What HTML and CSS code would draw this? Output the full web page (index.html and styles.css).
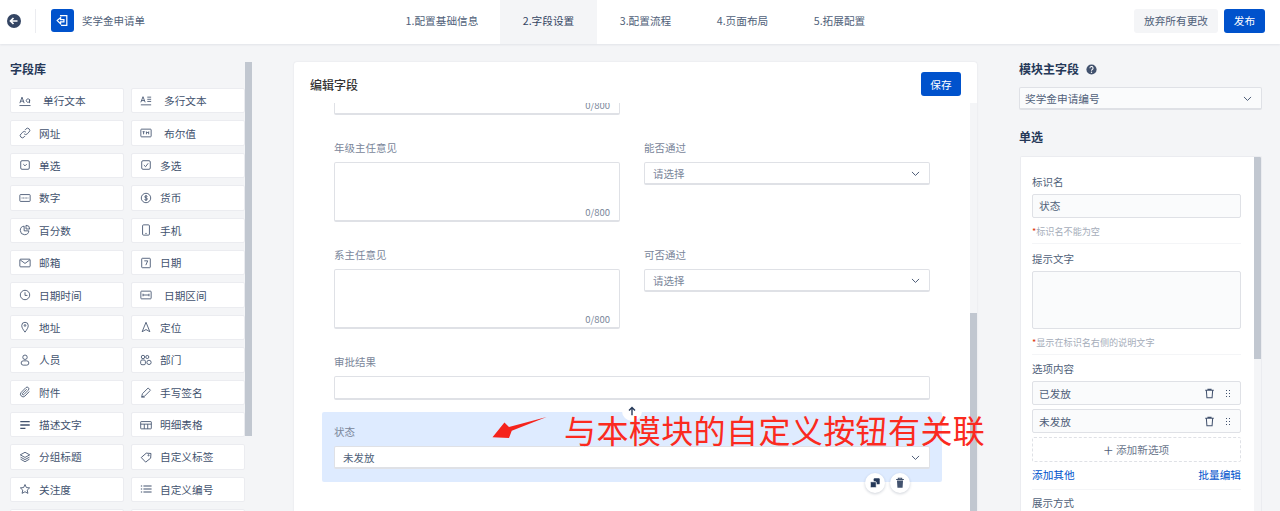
FILE: index.html
```html
<!DOCTYPE html>
<html lang="zh-CN">
<head>
<meta charset="utf-8">
<title>奖学金申请单</title>
<link rel="stylesheet" href="styles.css">
</head>
<body>
<svg class="defs" width="0" height="0" aria-hidden="true">
  <symbol id="i-text" viewBox="0 0 14 14"><path d="M1 9.500 3.500 2.500 6 9.500M1.800 7.200h3.400M12.300 5v4.500M12.300 7.300a2 2 0 1 0-.1.200M.5 12.300h13"/></symbol>
  <symbol id="i-multi" viewBox="0 0 14 14"><path d="M1 8.500 3.500 2 6 8.500M1.800 6.500h3.400M8.500 2.500H13M8.500 5H13M8.500 7.500H13M1 11.500h12"/></symbol>
  <symbol id="i-link" viewBox="0 0 14 14"><path d="M6 8a2.500 2.500 0 0 0 3.600 0l2.200-2.200a2.500 2.500 0 0 0-3.600-3.600L7 3.400M8 6a2.500 2.500 0 0 0-3.600 0L2.200 8.200a2.500 2.500 0 0 0 3.600 3.600L7 10.600"/></symbol>
  <symbol id="i-bool" viewBox="0 0 14 14"><rect x="1" y="2.500" width="12" height="9" rx=".8"/><path d="M3 5.500h2.500M4.200 5.500v3M7.500 8.500v-3l1.300 1.500 1.300-1.500v3"/></symbol>
  <symbol id="i-radio" viewBox="0 0 14 14"><rect x="2" y="2" width="10" height="10" rx="1.500"/><path d="M5 6l2 2 2-2"/></symbol>
  <symbol id="i-check" viewBox="0 0 14 14"><rect x="2" y="2" width="10" height="10" rx="1.500"/><path d="M4.500 7l2 2 3-4"/></symbol>
  <symbol id="i-num" viewBox="0 0 14 14"><rect x="1" y="3" width="12" height="8" rx=".8"/><path d="M3 7h8" stroke-dasharray="1.200 .6"/></symbol>
  <symbol id="i-money" viewBox="0 0 14 14"><circle cx="7" cy="7" r="5.500"/><path d="M8.700 5.200C8 4.300 5.400 4.300 5.400 5.700c0 1.500 3.300.8 3.300 2.400 0 1.500-2.700 1.500-3.500.6M7 3.500v7"/></symbol>
  <symbol id="i-pie" viewBox="0 0 14 14"><path d="M6 2.500a5 5 0 1 0 5.500 5.500H6z"/><path d="M8.200 1.500a4.300 4.300 0 0 1 4.300 4.300H8.200z"/></symbol>
  <symbol id="i-phone" viewBox="0 0 14 14"><rect x="3" y="1" width="8" height="12" rx="1.200"/><path d="M6.200 11h1.600"/></symbol>
  <symbol id="i-mail" viewBox="0 0 14 14"><rect x="1" y="2.500" width="12" height="9" rx="1"/><path d="M1.500 3.500 7 7.500l5.500-4"/></symbol>
  <symbol id="i-date" viewBox="0 0 14 14"><rect x="2" y="1.500" width="10" height="11" rx=".8"/><path d="M5 4.500h4L6.800 9.500"/></symbol>
  <symbol id="i-clock" viewBox="0 0 14 14"><circle cx="7" cy="7" r="5.500"/><path d="M7 3.800V7.500h2.800"/></symbol>
  <symbol id="i-range" viewBox="0 0 14 14"><rect x="1" y="2.500" width="12" height="9" rx=".8"/><path d="M3.500 7h7M3.500 5.500v3M10.500 5.500v3"/></symbol>
  <symbol id="i-pin" viewBox="0 0 14 14"><path d="M7 13C4.800 10 3.200 7.800 3.200 5.300a3.800 3.800 0 0 1 7.600 0C10.800 7.800 9.200 10 7 13z"/><circle cx="7" cy="5.200" r="1"/></symbol>
  <symbol id="i-nav" viewBox="0 0 14 14"><path d="M7 1.500 2.500 12.500 7 10l4.500 2.500z"/></symbol>
  <symbol id="i-user" viewBox="0 0 14 14"><circle cx="7" cy="3.800" r="2.600"/><rect x="2.500" y="8" width="9" height="5" rx="2.500"/></symbol>
  <symbol id="i-dept" viewBox="0 0 14 14"><circle cx="3.500" cy="3.500" r="2"/><circle cx="8.500" cy="3.500" r="1.800"/><rect x=".8" y="7" width="5.500" height="5.500" rx="1.500"/><circle cx="10.500" cy="9.800" r="2.500"/></symbol>
  <symbol id="i-clip" viewBox="0 0 14 14"><path d="M12 6.500 7 11.700a3 3 0 0 1-4.400-4.300l5.400-5.500a2 2 0 0 1 2.900 2.900L5.700 10a1 1 0 0 1-1.500-1.500L9 3.700"/></symbol>
  <symbol id="i-pen" viewBox="0 0 14 14"><path d="M2 12.500l.8-3.500 6.700-6.700 2.700 2.700-6.700 6.700zM1.500 13h4"/></symbol>
  <symbol id="i-desc" viewBox="0 0 14 14"><path d="M1.500 3h11M1.500 7h11M1.500 11h6" stroke-width="1.500"/></symbol>
  <symbol id="i-table" viewBox="0 0 14 14"><rect x=".8" y="3" width="12.400" height="8.500" rx=".6"/><path d="M.8 6h12.400M5 6v5.500M9 6v5.500"/></symbol>
  <symbol id="i-layer" viewBox="0 0 14 14"><path d="M7 1.500 12.500 4.500 7 7.500 1.500 4.500zM1.800 7.200 7 10l5.200-2.800M1.800 9.500 7 12.500l5.200-3"/></symbol>
  <symbol id="i-tag" viewBox="0 0 14 14"><path d="M1.500 8 7 2.500h5.500V8L7 13z" transform="rotate(4 7 7)"/><circle cx="10" cy="5" r=".7"/></symbol>
  <symbol id="i-star" viewBox="0 0 14 14"><path d="M7 1.800 8.600 5.300l3.800.4-2.800 2.600.8 3.800L7 10.200l-3.400 1.900.8-3.800L1.600 5.700l3.800-.4z"/></symbol>
  <symbol id="i-list" viewBox="0 0 14 14"><path d="M1 3.500h1.500M4 3.500h9.500M1 7h1.500M4 7h9.500M1 10.500h1.500M4 10.500h9.500" stroke-width="1.300"/></symbol>
  <symbol id="i-trash" viewBox="0 0 14 14"><path d="M1.500 3h11M5 3V1.500h4V3M3 3l.7 9.500h6.600L11 3" stroke-width="1.300"/></symbol>
  <symbol id="i-chev" viewBox="0 0 14 14"><path d="M2.500 5 7 9.500 11.500 5" stroke-width="1.200"/></symbol>
</svg>

<header class="topbar">
  <div class="brand">
    <svg class="back" viewBox="0 0 14 14"><circle cx="7" cy="7" r="7" fill="#344563"/><path d="M10.500 7H4M6.500 4 3.500 7l3 3" fill="none" stroke="#fff" stroke-width="1.700"/></svg>
    <span class="vline"></span>
    <span class="logo"><svg viewBox="0 0 24 24"><path d="M10 7.500V7h6.500v10H10.500M6.500 12l3.500-3v2h3.500v2.500H10v2z" fill="none" stroke="#fff" stroke-width="1.300"/></svg></span>
    <span class="app-name">奖学金申请单</span>
  </div>
  <nav class="tabs">
    <a class="tab">1.配置基础信息</a>
    <a class="tab active">2.字段设置</a>
    <a class="tab">3.配置流程</a>
    <a class="tab">4.页面布局</a>
    <a class="tab">5.拓展配置</a>
  </nav>
  <div class="actions">
    <button class="btn ghost">放弃所有更改</button>
    <button class="btn primary">发布</button>
  </div>
</header>

<main class="main">
  <aside class="library">
    <div class="library-list">
      <h2 class="title lib-title">字段库</h2>
      <div class="fields">
        <div class="field wide"><svg class="ic"><use href="#i-text"/></svg>单行文本</div>
        <div class="field wide"><svg class="ic"><use href="#i-multi"/></svg>多行文本</div>
        <div class="field"><svg class="ic"><use href="#i-link"/></svg>网址</div>
        <div class="field wide"><svg class="ic"><use href="#i-bool"/></svg>布尔值</div>
        <div class="field"><svg class="ic"><use href="#i-radio"/></svg>单选</div>
        <div class="field"><svg class="ic"><use href="#i-check"/></svg>多选</div>
        <div class="field"><svg class="ic"><use href="#i-num"/></svg>数字</div>
        <div class="field"><svg class="ic"><use href="#i-money"/></svg>货币</div>
        <div class="field"><svg class="ic"><use href="#i-pie"/></svg>百分数</div>
        <div class="field"><svg class="ic"><use href="#i-phone"/></svg>手机</div>
        <div class="field"><svg class="ic"><use href="#i-mail"/></svg>邮箱</div>
        <div class="field"><svg class="ic"><use href="#i-date"/></svg>日期</div>
        <div class="field"><svg class="ic"><use href="#i-clock"/></svg>日期时间</div>
        <div class="field wide"><svg class="ic"><use href="#i-range"/></svg>日期区间</div>
        <div class="field"><svg class="ic"><use href="#i-pin"/></svg>地址</div>
        <div class="field"><svg class="ic"><use href="#i-nav"/></svg>定位</div>
        <div class="field"><svg class="ic"><use href="#i-user"/></svg>人员</div>
        <div class="field"><svg class="ic"><use href="#i-dept"/></svg>部门</div>
        <div class="field"><svg class="ic"><use href="#i-clip"/></svg>附件</div>
        <div class="field"><svg class="ic"><use href="#i-pen"/></svg>手写签名</div>
        <div class="field"><svg class="ic"><use href="#i-desc"/></svg>描述文字</div>
        <div class="field"><svg class="ic"><use href="#i-table"/></svg>明细表格</div>
        <div class="field"><svg class="ic"><use href="#i-layer"/></svg>分组标题</div>
        <div class="field"><svg class="ic"><use href="#i-tag"/></svg>自定义标签</div>
        <div class="field"><svg class="ic"><use href="#i-star"/></svg>关注度</div>
        <div class="field"><svg class="ic"><use href="#i-list"/></svg>自定义编号</div>
        <div class="field"></div>
        <div class="field"></div>
      </div>
    </div>
    <div class="lib-thumb"></div>
  </aside>

  <section class="editor">
    <div class="editor-head">
      <h2 class="editor-title">编辑字段</h2>
      <button class="btn primary">保存</button>
    </div>
    <div class="editor-body">
      <div class="form">
        <div class="form-row cols">
          <div class="stub"><span class="count">0/800</span></div>
        </div>
        <div class="form-row cols">
          <div>
            <label class="lbl">年级主任意见</label>
            <div class="area"><span class="count">0/800</span></div>
          </div>
          <div>
            <label class="lbl">能否通过</label>
            <div class="select"><span class="placeholder">请选择</span><svg class="chev"><use href="#i-chev"/></svg></div>
          </div>
        </div>
        <div class="form-row cols">
          <div>
            <label class="lbl">系主任意见</label>
            <div class="area"><span class="count">0/800</span></div>
          </div>
          <div>
            <label class="lbl">可否通过</label>
            <div class="select"><span class="placeholder">请选择</span><svg class="chev"><use href="#i-chev"/></svg></div>
          </div>
        </div>
        <div class="form-row last">
          <label class="lbl">审批结果</label>
          <div class="input"></div>
        </div>
        <div class="selected">
          <span class="float-btn up"><svg viewBox="0 0 14 14"><path d="M7 12V3M3.500 6.500 7 3l3.500 3.500" fill="none" stroke="#253858" stroke-width="1.600"/></svg></span>
          <label class="lbl">状态</label>
          <div class="select short"><span class="value">未发放</span><svg class="chev"><use href="#i-chev"/></svg></div>
          <span class="float-btn copy"><svg viewBox="0 0 14 14"><rect x="5.500" y="1.500" width="7" height="7" rx="1" fill="#253858"/><rect x="1.500" y="5.500" width="7" height="7" rx="1" fill="#253858" stroke="#fff"/></svg></span>
          <span class="float-btn del"><svg viewBox="0 0 14 14"><path d="M2.500 3h9M5 3V1.500h4V3" fill="none" stroke="#42526e" stroke-width="1.200"/><path d="M3.500 4h7l-.5 8.500H4z" fill="#42526e"/></svg></span>
          <svg class="pointer" viewBox="0 0 60 24"><polygon points="59,0 21,15 18,23 0,22 13,6 18,11"/></svg>
          <span class="note">与本模块的自定义按钮有关联</span>
        </div>
      </div>
      <div class="track"><div class="thumb"></div></div>
    </div>
  </section>

  <aside class="props">
    <h2 class="title with-help">模块主字段 <svg class="help" viewBox="0 0 14 14"><circle cx="7" cy="7" r="6.500" fill="#42526e"/><path d="M5 5.300a2 2 0 1 1 3 1.700c-.7.400-1 .8-1 1.500" fill="none" stroke="#fff" stroke-width="1.300"/><circle cx="7" cy="10.500" r=".9" fill="#fff"/></svg></h2>
    <div class="select soft"><span class="value">奖学金申请编号</span><svg class="chev"><use href="#i-chev"/></svg></div>
    <h2 class="title single">单选</h2>
    <div class="panel">
      <div class="panel-body">
        <label class="plbl first">标识名</label>
        <div class="pinput">状态</div>
        <p class="hint"><b>*</b>标识名不能为空</p>
        <hr class="rule">
        <label class="plbl">提示文字</label>
        <div class="parea"></div>
        <p class="hint"><b>*</b>显示在标识名右侧的说明文字</p>
        <hr class="rule">
        <label class="plbl tight">选项内容</label>
        <div class="option">已发放<svg class="opt-trash"><use href="#i-trash"/></svg><span class="grip"></span></div>
        <div class="option">未发放<svg class="opt-trash"><use href="#i-trash"/></svg><span class="grip"></span></div>
        <div class="add"><span class="plus">+</span>添加新选项</div>
        <div class="links"><a>添加其他</a><a>批量编辑</a></div>
        <hr class="rule">
        <label class="plbl tighter">展示方式</label>
      </div>
      <div class="panel-track"><div class="panel-thumb"></div></div>
    </div>
  </aside>
</main>
</body>
</html>
```

FILE: styles.css
```css
* { box-sizing: border-box; }
html, body { margin: 0; height: 100%; }
body {
  height: 511px;
  overflow: hidden;
  background: #f4f5f7;
  color: #42526e;
  font-family: "Noto Sans CJK SC", "Noto Sans", sans-serif;
  font-size: 10.670px;
  display: flex;
  flex-direction: column;
}
.defs { position: absolute; }
h2, p { margin: 0; }
hr { margin: 0; border: 0; }

/* top bar */
.topbar {
  flex: none;
  height: 44px;
  background: #fff;
  box-shadow: 0 1px 2px rgba(9, 30, 66, .08);
  display: flex;
  align-items: stretch;
  position: relative;
  z-index: 2;
}
.brand { width: 384px; display: flex; align-items: center; padding: 0 0 3px 7px; }
.back { width: 14px; height: 14px; }
.vline { width: 1px; height: 24px; background: #ebecf0; margin: 0 15px 0 14px; }
.logo { width: 23px; height: 23px; border-radius: 3px; background: #0052cc; display: flex; }
.logo svg { width: 23px; height: 23px; }
.app-name { margin-left: 8px; color: #505f79; font-size: 10.500px; }
.tabs { display: flex; }
.tab { width: 97px; display: flex; align-items: center; justify-content: center; padding-bottom: 3px; white-space: nowrap; color: #505f79; }
.tab:first-child { width: 116px; }
.tab.active { background: #f4f5f7; color: #344563; width: 97px; }
.actions { margin-left: auto; display: flex; align-items: center; gap: 6px; padding: 0 15px 3px 0; }
.btn { height: 24px; border: 0; border-radius: 3px; padding: 0; font: inherit; }
.ghost { width: 84px; background: #f4f5f7; color: #505f79; }
.primary { width: 41px; background: #0052cc; color: #fff; }

/* main */
.main { flex: 1; min-height: 0; display: flex; padding-top: 18px; overflow: hidden; }

/* library */
.library { flex: none; width: 252px; padding-left: 10px; display: flex; align-items: flex-start; height: 100%; }
.library-list { width: 235px; height: 100%; overflow: hidden; flex: none; }
.lib-thumb { width: 7px; height: 374px; background: #c1c7d0; flex: none; }
.title { font-size: 12px; line-height: 14px; font-weight: 700; color: #253858; }
.lib-title { margin-bottom: 12px; }
.fields { display: grid; grid-template-columns: 114px 114px; column-gap: 7px; grid-auto-rows: 25.400px; row-gap: 7px; }
.field {
  background: #fff;
  border: 1px solid #ebecf0;
  border-radius: 2px;
  display: flex;
  align-items: center;
  gap: 8px;
  padding-left: 8px;
  white-space: nowrap;
}
.field.wide { gap: 12px; }
.ic { width: 12px; height: 12px; flex: none; fill: none; stroke: #42526e; stroke-width: 1; overflow: visible; }

/* editor */
.editor { flex: none; width: 683px; margin-left: 42px; background: #fff; border-radius: 3px 3px 0 0; box-shadow: 0 0 2px rgba(9, 30, 66, .1); display: flex; flex-direction: column; }
.editor-head { flex: none; height: 41px; display: flex; justify-content: space-between; align-items: center; padding: 3px 16px 0; }
.editor-title { font-size: 12px; font-weight: 500; color: #333; }
.editor-head .primary { width: 40px; height: 24px; }
.editor-body { flex: 1; min-height: 0; display: flex; }
.form { flex: 1; padding: 0 28px; }
.track { width: 7px; background: #f4f5f7; padding-top: 210px; }
.thumb { height: 198px; background: #c1c7d0; }
.form-row { padding: 0 12px; margin-bottom: 26px; }
.form-row.last { margin-bottom: 12px; }
.cols { display: grid; grid-template-columns: 286px 286px; column-gap: 24px; }
.lbl { display: block; font-size: 10.500px; line-height: 14px; color: #7a869a; margin-bottom: 7px; }
.stub { height: 12px; border: 1px solid #dfe1e6; border-width: 0 1px 2px; border-radius: 0 0 2px 2px; overflow: hidden; display: flex; justify-content: flex-end; align-items: flex-end; padding: 0 9px 1px; }
.area { height: 60px; border: 1px solid #dfe1e6; border-bottom-width: 2px; border-radius: 2px; display: flex; justify-content: flex-end; align-items: flex-end; padding: 0 9px 1px; }
.count { font-size: 9.500px; line-height: 14px; color: #7a869a; }
.select { height: 23px; border: 1px solid #dfe1e6; border-bottom-width: 2px; border-radius: 2px; background: #fff; display: flex; align-items: center; justify-content: space-between; padding: 0 8px 0 8px; }
.placeholder { color: #7a869a; font-size: 10.500px; }
.value { color: #505f79; font-size: 10.500px; }
.chev { width: 11px; height: 11px; fill: none; stroke: #42526e; }
.input { height: 24px; border: 1px solid #dfe1e6; border-bottom-width: 2px; border-radius: 2px; }
.selected { position: relative; height: 70px; background: #deebff; border-radius: 2px; padding: 13px 12px; }
.selected .lbl { margin-bottom: 7px; }
.float-btn { position: absolute; width: 20px; height: 20px; border-radius: 50%; background: #fff; box-shadow: 0 1px 3px rgba(9, 30, 66, .2); display: flex; align-items: center; justify-content: center; }
.float-btn svg { width: 12px; height: 12px; }
.up { left: 300px; top: -11px; box-shadow: none; }
.copy { left: 543px; top: 61px; }
.del { left: 568px; top: 61px; }
.pointer { position: absolute; left: 169px; top: 5px; width: 58px; height: 22px; fill: #f5231c; }
.note { position: absolute; left: 242px; top: -5px; font-size: 32px; line-height: 44px; letter-spacing: .4px; color: #fb2a20; white-space: nowrap; }

/* right panel */
.props { flex: none; width: 243px; margin-left: 42px; }
.with-help { display: flex; align-items: center; gap: 7px; margin-bottom: 11px; }
.help { width: 11px; height: 11px; }
.select.soft { background: #fafbfc; padding-left: 5px; height: 23px; }
.soft .value { font-size: 10.670px; }
.single { margin-top: 20px; margin-bottom: 12px; }
.panel { margin-left: 1px; height: 355px; background: #fff; border: 1px solid #ebecf0; border-bottom: 0; display: flex; border-radius: 2px 2px 0 0; overflow: hidden; }
.panel-body { width: 233px; padding: 0 0 0 11px; flex: none; }
.panel-track { margin-left: 0; width: 8px; background: #f4f5f7; }
.panel-thumb { height: 202px; background: #c1c7d0; }
.panel-body > * { width: 209px; }
.plbl { display: block; font-size: 10.500px; line-height: 14px; color: #505f79; margin-top: 8px; margin-bottom: 5px; }
.plbl.first { margin-top: 18px; }
.plbl.tight { margin-top: 7px; }
.plbl.tighter { margin-top: 6px; }
.pinput { height: 24px; background: #fafbfc; border: 1px solid #dfe1e6; border-radius: 2px; padding-left: 6px; line-height: 21px; color: #505f79; font-size: 10.670px; }
.parea { height: 58px; background: #fafbfc; border: 1px solid #dfe1e6; border-radius: 2px; }
.hint { font-size: 9.100px; line-height: 12px; color: #a5adba; margin-top: 7px; margin-bottom: 6px; }
.hint b { color: #de350b; font-weight: 400; }
.rule { height: 1px; background: #f4f5f7; }
.option { height: 24px; margin-bottom: 4px; background: #fafbfc; border: 1px solid #dfe1e6; border-radius: 2px; padding-left: 6px; display: flex; align-items: center; color: #505f79; font-size: 10.670px; }
.opt-trash { margin-left: auto; width: 11px; height: 11px; fill: none; stroke: #42526e; }
.grip { width: 6px; height: 9px; margin: 0 9px 0 10px; background-image: radial-gradient(circle, #42526e .9px, transparent 1px); background-size: 3px 3px; }
.add { height: 25px; border: 1px dashed #dfe1e6; border-radius: 2px; display: flex; align-items: center; justify-content: center; color: #6b778c; font-size: 10.670px; }
.plus { font-size: 17px; line-height: 1; margin-right: 3px; color: #505f79; font-weight: 300; }
.links { display: flex; justify-content: space-between; margin: 6px 0 7px; line-height: 14px; color: #0052cc; font-size: 10.670px; }
```
